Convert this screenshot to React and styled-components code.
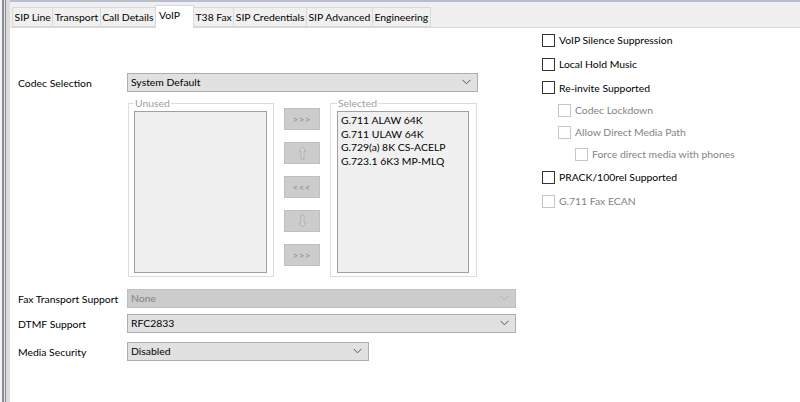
import React from "react";
import styled, { createGlobalStyle } from "styled-components";

const FS = "10.4px";

const Global = createGlobalStyle`
  html, body { margin: 0; padding: 0; background: #fff; }
  body { font-family: Lato, "Noto Sans", sans-serif; font-size: ${FS}; color: #000; }
  * { box-sizing: border-box; }
`;

const Window = styled.div`
  display: flex;
  width: 800px;
  height: 402px;
  overflow: hidden;
  background: #fff;
`;

const Edge = styled.div`
  width: 10px;
  flex: none;
  background: linear-gradient(to right, #f4f4f4 0 2px, #8a8a94 2px 4px, #e6e6e6 4px 5px, #8a8a94 5px 6px, #dcdcdc 6px 10px);
`;

const Main = styled.div`
  flex: 1;
  display: flex;
  flex-direction: column;
`;

const TopLine = styled.div`
  height: 2px;
  background: #b7bfcc;
`;

const TabBar = styled.div`
  height: 26px;
  background: #f0f0f0;
  display: flex;
  align-items: flex-end;
  padding-left: 2px;
  border-bottom: 1px solid #d9d9d9;
`;

const Tab = styled.div`
  height: ${(p) => (p.$active ? "23px" : "20px")};
  margin-bottom: ${(p) => (p.$active ? "-1px" : "0")};
  padding: ${(p) => (p.$active ? "2px 4px 0 3px" : "2px 1.5px 0 1.5px")};
  width: ${(p) => (p.$w ? p.$w + "px" : "auto")};
  background: ${(p) => (p.$active ? "#fff" : "#f0f0f0")};
  border: 1px solid #d9d9d9;
  border-bottom: ${(p) => (p.$active ? "none" : "1px solid #d9d9d9")};
  margin-right: -1px;
  font-size: ${FS};
  line-height: 15px;
  white-space: nowrap;
  position: relative;
`;

const Content = styled.div`
  flex: 1;
  display: flex;
`;

const LeftPane = styled.div`
  width: 532px;
  padding: 45px 0 0 8px;
  display: flex;
  flex-direction: column;
`;

const Row = styled.div`
  display: flex;
  align-items: center;
  height: ${(p) => p.$h || 18}px;
  margin-top: ${(p) => p.$mt || 0}px;
`;

const Label = styled.div`
  width: 109px;
  flex: none;
  font-size: ${FS};
  white-space: nowrap;
  color: #000;
  padding-top: 2px;
`;

const Combo = styled.div`
  width: ${(p) => p.$w}px;
  height: ${(p) => p.$h || 19}px;
  background: ${(p) => (p.$disabled ? "#cccccc" : "#e1e1e1")};
  border: 1px solid ${(p) => (p.$disabled ? "#bfbfbf" : "#adadad")};
  color: ${(p) => (p.$disabled ? "#838383" : "#000")};
  display: flex;
  align-items: center;
  justify-content: space-between;
  padding: 0 6px 0 3px;
  font-size: ${FS};
`;

const Chevron = ({ color = "#555" }) => (
  <svg width="9" height="6" viewBox="0 0 9 6">
    <path d="M0.5 0.8 L4.5 4.8 L8.5 0.8" fill="none" stroke={color} strokeWidth="1" />
  </svg>
);

const CodecArea = styled.div`
  display: flex;
  margin-left: 110px;
  margin-top: 6px;
  height: 182px;
`;

const Group = styled.fieldset`
  margin: 0;
  width: ${(p) => p.$w}px;
  border: 1px solid #dcdcdc;
  padding: 0 ${(p) => p.$pr}px 3px ${(p) => p.$pl}px;
  height: 180px;
  display: flex;
  flex-direction: column;
`;

const Legend = styled.legend`
  padding: 0 1px;
  margin-left: 0;
  font-size: ${FS};
  line-height: 12px;
  color: #a0a0a0;
`;

const ListBox = styled.div`
  flex: 1;
  margin-top: 2px;
  background: #f0f0f0;
  border: 1px solid #a0a0a0;
  padding: 2px 3px;
  font-size: ${FS};
  line-height: 13.7px;
  color: #000;
`;

const ButtonCol = styled.div`
  width: 36px;
  margin: 11px 10px 0 10px;
  display: flex;
  flex-direction: column;
  gap: 12px;
`;

const MoveBtn = styled.div`
  width: 36px;
  height: 22px;
  background: #cccccc;
  border: 1px solid #bfbfbf;
  color: #8a8a8a;
  font-size: 9px;
  display: flex;
  align-items: center;
  justify-content: center;
  letter-spacing: 1px;
`;

const Arrow = ({ down }) => (
  <svg width="9" height="14" viewBox="0 0 9 14" style={{ transform: down ? "rotate(180deg)" : "none" }}>
    <path d="M4.5 1 L8 5 L6 5 L6 13 L3 13 L3 5 L1 5 Z" fill="#d4d4d4" stroke="#a8a8a8" strokeWidth="0.8" strokeLinejoin="round" />
  </svg>
);

const RightPane = styled.div`
  padding: 0;
  display: flex;
  flex-direction: column;
`;

const CheckRow = styled.label`
  display: flex;
  align-items: center;
  gap: 4px;
  height: ${(p) => p.$h}px;
  padding-left: ${(p) => p.$indent || 0}px;
  color: ${(p) => (p.$disabled ? "#838383" : "#000")};
  font-size: ${FS};
`;

const Box = styled.span`
  width: 13px;
  height: 13px;
  flex: none;
  border: 1px solid ${(p) => (p.$disabled ? "#c6c6c6" : "#333")};
  background: #fff;
`;

const tabs = [
  { t: "SIP Line" },
  { t: "Transport" },
  { t: "Call Details" },
  { t: "VoIP", active: true, w: 39 },
  { t: "T38 Fax" },
  { t: "SIP Credentials" },
  { t: "SIP Advanced" },
  { t: "Engineering" },
];

const checks = [
  { t: "VoIP Silence Suppression", h: 24 },
  { t: "Local Hold Music", h: 24 },
  { t: "Re-invite Supported", h: 23 },
  { t: "Codec Lockdown", h: 22, indent: 16, d: true },
  { t: "Allow Direct Media Path", h: 22, indent: 16, d: true },
  { t: "Force direct media with phones", h: 22, indent: 33, d: true },
  { t: "PRACK/100rel Supported", h: 24 },
  { t: "G.711 Fax ECAN", h: 24, d: true },
];

export default function App() {
  return (
    <>
      <Global />
      <Window>
        <Edge />
        <Main>
          <TopLine />
          <TabBar>
            {tabs.map((x) => (
              <Tab key={x.t} $active={x.active} $w={x.w}>
                {x.t}
              </Tab>
            ))}
          </TabBar>
          <Content>
            <LeftPane>
              <Row>
                <Label>Codec Selection</Label>
                <Combo $w={351}>
                  System Default
                  <Chevron />
                </Combo>
              </Row>
              <CodecArea>
                <Group $w={146} $pl={5} $pr={6}>
                  <Legend>Unused</Legend>
                  <ListBox />
                </Group>
                <ButtonCol>
                  <MoveBtn>&gt;&gt;&gt;</MoveBtn>
                  <MoveBtn><Arrow /></MoveBtn>
                  <MoveBtn>&lt;&lt;&lt;</MoveBtn>
                  <MoveBtn><Arrow down /></MoveBtn>
                  <MoveBtn>&gt;&gt;&gt;</MoveBtn>
                </ButtonCol>
                <Group $w={147} $pl={6} $pr={7}>
                  <Legend>Selected</Legend>
                  <ListBox>
                    <div>G.711 ALAW 64K</div>
                    <div>G.711 ULAW 64K</div>
                    <div>G.729(a) 8K CS-ACELP</div>
                    <div>G.723.1 6K3 MP-MLQ</div>
                  </ListBox>
                </Group>
              </CodecArea>
              <Row $mt={10}>
                <Label>Fax Transport Support</Label>
                <Combo $w={389} $disabled>
                  None
                  <Chevron color="#b0b0b0" />
                </Combo>
              </Row>
              <Row $mt={7}>
                <Label>DTMF Support</Label>
                <Combo $w={389}>
                  RFC2833
                  <Chevron />
                </Combo>
              </Row>
              <Row $mt={10}>
                <Label>Media Security</Label>
                <Combo $w={242}>
                  Disabled
                  <Chevron />
                </Combo>
              </Row>
            </LeftPane>
            <RightPane>
              {checks.map((c) => (
                <CheckRow key={c.t} $h={c.h} $indent={c.indent} $disabled={c.d}>
                  <Box $disabled={c.d} />
                  {c.t}
                </CheckRow>
              ))}
            </RightPane>
          </Content>
        </Main>
      </Window>
    </>
  );
}
